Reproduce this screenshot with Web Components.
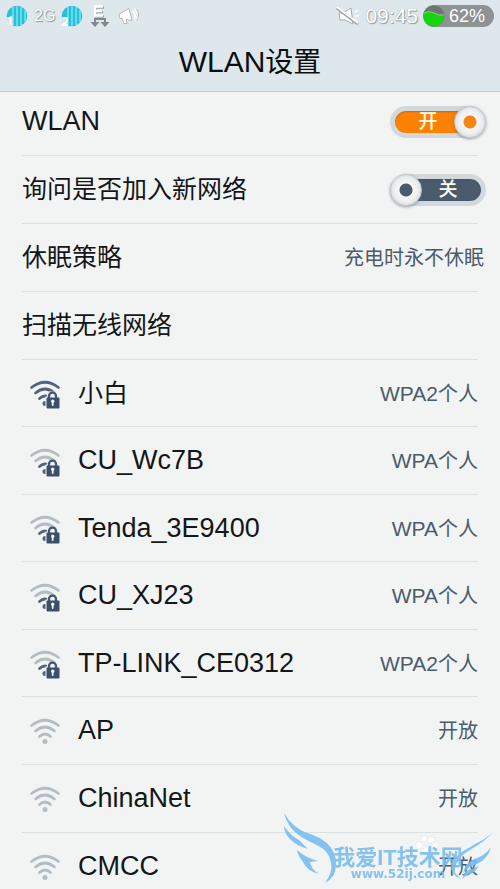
<!DOCTYPE html>
<html lang="zh-CN">
<head>
<meta charset="utf-8">
<meta name="viewport" content="width=device-width, initial-scale=1">
<title>WLAN设置</title>
<style>
html,body{margin:0;height:100%;overflow:hidden}
body{font-family:"Liberation Sans","Noto Sans CJK SC",sans-serif;color:#141618;background:#f2f4f4}
.han{font-size:25px;line-height:1}
.han-title{font-size:28px;line-height:1}
</style>
</head>
<body>
<settings-screen>
  <status-bar slot="status"></status-bar>
  <title-bar slot="title">WLAN<span class="han-title">设置</span></title-bar>
  <setting-row>WLAN<toggle-switch slot="value" checked name="WLAN"></toggle-switch></setting-row>
  <setting-row><span class="han">询问是否加入新网络</span><toggle-switch slot="value" name="询问是否加入新网络"></toggle-switch></setting-row>
  <setting-row><span class="han">休眠策略</span><span slot="value">充电时永不休眠</span></setting-row>
  <setting-row><span class="han">扫描无线网络</span></setting-row>
  <network-row secure level="3" protocol="WPA2" access="个人"><span class="han">小白</span></network-row>
  <network-row secure level="1" protocol="WPA" access="个人">CU_Wc7B</network-row>
  <network-row secure level="1" protocol="WPA" access="个人">Tenda_3E9400</network-row>
  <network-row secure level="1" protocol="WPA" access="个人">CU_XJ23</network-row>
  <network-row secure level="1" protocol="WPA2" access="个人">TP-LINK_CE0312</network-row>
  <network-row level="0" access="开放">AP</network-row>
  <network-row level="0" access="开放">ChinaNet</network-row>
  <network-row level="0" access="开放">CMCC</network-row>
  <site-mark slot="mark"></site-mark>
</settings-screen>
<script>
function define(name, html, setup) {
  customElements.define(name, class extends HTMLElement {
    constructor() {
      super();
      this.attachShadow({mode: "open"});
    }
    connectedCallback() {
      this.shadowRoot.innerHTML = typeof html === "function" ? html(this) : html;
      if (setup) setup(this, this.shadowRoot);
    }
  });
}

define("settings-screen", `
<style>
:host{display:flex;flex-direction:column;height:100vh;position:relative;overflow:hidden}
header{background:#dee7eb;border-bottom:1px solid #c3ced1;flex:none}
main{flex:1;min-height:0;overflow-y:auto;scrollbar-width:none;background:#f2f4f4}
</style>
<header><slot name="status"></slot><slot name="title"></slot></header>
<main><slot></slot></main>
<slot name="mark"></slot>`);

define("title-bar", `
<style>
:host{display:block}
h1{margin:0;height:59px;line-height:60px;font-size:30px;font-weight:400;text-align:center;color:#0c0e10}
</style>
<h1><slot></slot></h1>`);

const sim = n => `<svg width="22" height="22" viewBox="0 0 22 22">
<circle cx="11" cy="11" r="10.3" fill="#29bfd6"/>
<path d="M7 2v18M11 1v20M15 2v18M19 5v12" stroke="#72e4ee" stroke-width="1.6"/>
<path d="M0 12h7v10H0z" fill="#dee7eb" opacity=".8"/>
<path d="${n === 1 ? "M2.5 14l2-1.500v7" : "M2 14q4-2 4 1q0 1.500-4 5h5"}" fill="none" stroke="#fff" stroke-width="2"/></svg>`;

define("status-bar", `
<style>
:host{display:flex;height:32px;align-items:center;padding:0 6px;box-sizing:border-box;font-size:16px;color:#fff}
svg{display:block;flex:none}
.left,.right{display:flex;align-items:center}
.left{gap:6px}
.right{margin-left:auto;gap:5px}
.shade{text-shadow:0 0 1px #8d979c,1px 1px 1px #8d979c}
.time{font-size:21px}
.battery{display:flex;align-items:center;gap:4px;height:22px;width:71px;border-radius:11px;background:#8d9294;font-size:18px}
</style>
<div class="left">${sim(1)}<span class="shade">2G</span>${sim(2)}
<svg width="22" height="24" viewBox="0 0 22 24"><path d="M5 2.500h9M5 7h8M5 11.500h9M6 2v10" transform="translate(1 1)" stroke="#9ba5aa" stroke-width="2.400" fill="none"/><path d="M5 2.500h9M5 7h8M5 11.500h9M6 2v10" stroke="#fff" stroke-width="2.400" fill="none"/><path d="M6 20v-5h10v5" fill="none" stroke="#7f888d" stroke-width="2"/><path d="M1.500 18h9L6 23zM11.500 18h9L16 23z" fill="#7f888d"/></svg>
<svg width="22" height="22" viewBox="0 0 22 22"><g stroke="#a3adb2" stroke-width=".8"><path d="M2 9l10-5.500 3 12-6-1 1 4H7l-2-5H3z" fill="#fff"/></g><path d="M15.500 6q4 3 1.500 8M18 4q5 5 1 12" fill="none" stroke="#fff" stroke-width="1.800"/><path d="M19.500 4q4 6 0 12" fill="none" stroke="#a3adb2" stroke-width=".8"/></svg></div>
<div class="right">
<svg width="24" height="22" viewBox="0 0 24 22"><path d="M3 8h4l8-5 2 16-8-4H4z" fill="#fff" stroke="#a3adb2"/><path d="M19 7l3-2M19 11h4M19 15l3 2" stroke="#fff" stroke-width="1.500"/><path d="M1 3l21 16" stroke="#9ba5aa" stroke-width="3"/><path d="M1 2l21 16" stroke="#fff" stroke-width="1.800"/></svg>
<span class="shade time">09:45</span>
<span class="battery"><svg width="22" height="22" viewBox="0 0 22 22"><circle cx="11" cy="11" r="10.500" fill="#6e7673"/><path d="M1 8q5-3 10 0t10 2A10.300 10.300 0 1 1 1 8z" fill="#18d310"/><path d="M1 8q5-3 10 0t10 2" stroke="#72df6c" fill="none"/></svg>62%</span></div>`);

define("setting-row", `
<style>
:host{display:block;padding:0 16px 0 22px}
.row{display:flex;align-items:center;justify-content:space-between;height:67px;white-space:nowrap}
:host(:first-of-type) .row{height:59px;padding-bottom:4px}
.label{font-size:27px;line-height:1}
.value{font-size:20px;line-height:1;color:#4b5b6a;display:flex;align-items:center}
hr{margin:0 6px 0 0;border:0;height:1px;background:#d9e1e3}
</style>
<div class="row"><span class="label"><slot></slot></span><span class="value"><slot name="value"></slot></span></div><hr>`);

define("toggle-switch", `
<style>
:host{display:block;margin-right:-2px}
label{display:grid;width:96px;height:32px;cursor:pointer}
label>*{grid-area:1/1}
input{appearance:none;margin:0;width:96px;height:32px;border-radius:16px;background:#4b5b6e;border:5px solid #d2d9dd;box-sizing:border-box;box-shadow:inset 0 1px 2px #34404c55}
input:checked{background:#fd8204}
.text{place-self:center;font-size:19px;font-weight:500;line-height:20px;color:#fffbea;padding-left:20px;pointer-events:none}
.knob{place-self:center start;box-sizing:border-box;width:32px;height:32px;border-radius:50%;background:radial-gradient(circle,var(--dot,#4b5b6e) 6px,#f7f8f8 7px,#eceeef 12px,#dde1e3 15px);border:1px solid #c2c8cb;box-shadow:0 1px 3px #59616799;pointer-events:none}
input:checked~.text{padding:0 20px 0 0}
input:checked~.knob{justify-self:end;--dot:#f68511}
</style>
<label><input type="checkbox" role="switch"><span class="text"></span><span class="knob"></span></label>`,
(host, root) => {
  const input = root.querySelector("input"), text = root.querySelector(".text");
  const update = () => text.textContent = input.checked ? "开" : "关";
  input.checked = host.hasAttribute("checked");
  input.setAttribute("aria-label", host.getAttribute("name"));
  input.addEventListener("change", update);
  update();
});

define("wifi-icon", host => {
  const level = +host.getAttribute("level"), lock = host.hasAttribute("secure");
  const c = n => level >= n ? "#52647a" : "#b3bdc3";
  const low = lock ? "#52647a" : "#b3bdc3";
  return `<style>:host{display:block}svg{display:block}</style>
<svg width="32" height="36" viewBox="0 0 32 36" fill="none" stroke-width="2.700" stroke-linecap="round">
<path d="M2.500 12.500Q16 2 29.500 12.500" stroke="${c(3)}"/>
<path d="M6.500 18Q16 10 25.500 18" stroke="${c(2)}"/>
<path d="M10.500 23.500Q16 18.500 21.500 23.500" stroke="${low}"/>
<circle cx="16" cy="28.500" r="2.500" fill="${low}"/>
${lock ? `<path d="M16.500 21.500h1.500q0-5.500 5.500-5.500t6 5.500h2V36H16.500z" fill="#f2f5f7"/><path d="M20 24v-3a3.500 3.500 0 0 1 7 0v3" stroke="#465971" stroke-width="2.300"/><rect x="17.500" y="22.500" width="13" height="11" rx="1" fill="#3c4f69"/><path d="M23.700 26v4" stroke="#eef3f7" stroke-width="1.800"/><circle cx="23.700" cy="26.300" r="1.700" fill="#eef3f7"/>` : ""}
</svg>`;
});

define("network-row", host => `
<style>
:host{display:block;padding:0 22px}
.row{display:flex;align-items:center;gap:17px;height:67px;padding-left:7px;white-space:nowrap}
:host([secure]:nth-of-type(odd)) .row{height:66px}
.name{font-size:27px;line-height:1;flex:1}
.security{font-size:20px;line-height:1;color:#4b5b6a}
.protocol{font-size:21px}
hr{margin:0;border:0;height:1px;background:#d9e1e3}
</style>
<div class="row"><wifi-icon level="${host.getAttribute("level")}" ${host.hasAttribute("secure") ? "secure" : ""}></wifi-icon>
<span class="name"><slot></slot></span><span class="security"><span class="protocol">${host.getAttribute("protocol") || ""}</span>${host.getAttribute("access")}</span></div><hr>`);

define("site-mark", `
<style>
:host{position:absolute;right:0;bottom:0;width:220px;height:84px;pointer-events:none;color:#79bdef;opacity:.9}
svg{position:absolute;inset:0}
.text{position:absolute;left:52px;bottom:8px;width:132px;text-align:center}
.name{font:700 22px/20px "Liberation Sans","Noto Sans CJK SC",sans-serif;white-space:nowrap}
.url{font:700 12px/13px "DejaVu Sans",sans-serif}
</style>
<svg width="220" height="84" viewBox="0 0 220 84" fill="#79bdef">
<g fill="#fff" stroke="#dfe4e7" stroke-width=".7"><circle cx="139" cy="40" r="3.500"/><circle cx="144" cy="34" r="3.500"/><circle cx="151" cy="35" r="3.500"/><circle cx="155" cy="41" r="3.500"/><path d="M147 40l7 8q-6 4-14 0z"/></g>
<path d="M4 8Q13 24 30 29C46 34 57 45 56 60Q56 72 45 78Q53 67 51 58C49 43 37 41 25 34Q8 25 4 8z"/>
<path d="M4 21Q11 31 19 35L28 44Q15 40 10 34Q4 28 4 21z"/>
<path d="M17 45Q26 53 38 56L30 57Q31 64 39 69Q27 66 23 57Q18 51 17 45z"/>
<path d="M213 27Q204 37 193 43C181 50 174 57 175 68L181 74Q171 70 171 62C172 50 188 44 195 39Q206 34 213 27z"/>
<path d="M211 42Q208 54 197 59Q188 62 183 68Q185 58 194 54Q205 51 211 42z"/>
<path d="M199 60Q196 68 187 70L182 74Q184 66 190 64Q197 63 199 60z"/>
</svg>
<div class="text"><div class="name">我爱IT技术网</div><div class="url">www.52ij.com</div></div>`);
</script>
</body>
</html>
